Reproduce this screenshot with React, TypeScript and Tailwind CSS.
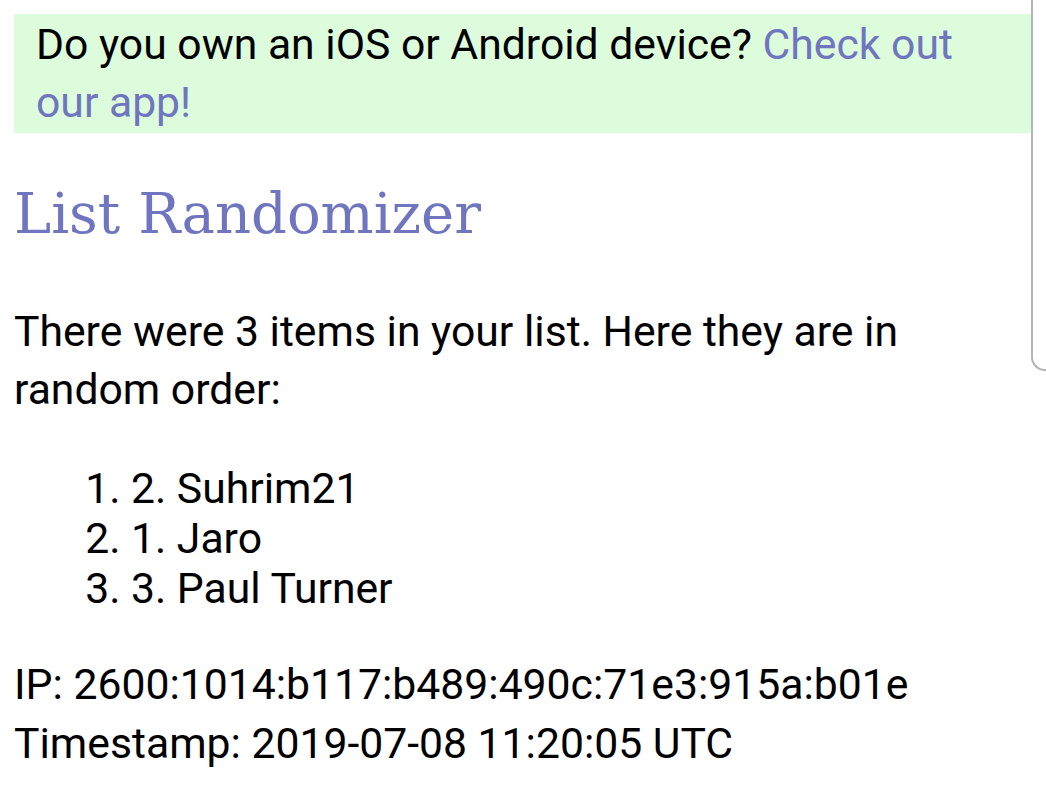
export default function App() {
  return (
    <div className="relative w-[1046px] h-[800px] overflow-hidden bg-white text-black" style={{ fontFamily: 'Roboto, "Noto Sans", sans-serif' }}>
      <div className="px-[14px] pr-[15px] pt-[14px]">
        <div className="bg-[#dcfcdc] pl-[22px] pr-[30px] pt-px pb-[2px] text-[42.7px] leading-[58px]">
          Do you own an iOS or Android device?{" "}
          <a className="text-[#7075c0]">Check out our app!</a>
        </div>
        <h1
          className="mt-[48px] text-[56px] leading-[65px] text-[#7075c0] font-normal"
          style={{ fontFamily: '"DejaVu Serif", serif' }}
        >
          List Randomizer
        </h1>
        <p className="mt-[56px] text-[42.7px] leading-[58px]">
          There were 3 items in your list. Here they are in random order:
        </p>
        <ol className="mt-[45px] list-decimal pl-[117px] text-[42.7px] leading-[50px]">
          <li>2. Suhrim21</li>
          <li>1. Jaro</li>
          <li>3. Paul Turner</li>
        </ol>
        <p className="mt-[42px] text-[42.7px] leading-[59px]">
          IP: 2600:1014:b117:b489:490c:71e3:915a:b01e
          <br />
          Timestamp: 2019-07-08 11:20:05 UTC
        </p>
      </div>
      <div className="absolute left-[1031px] top-[-20px] w-[40px] h-[391px] border-l-2 border-b-2 border-[#b4b4b4] rounded-bl-[14px]" />
    </div>
  );
}
